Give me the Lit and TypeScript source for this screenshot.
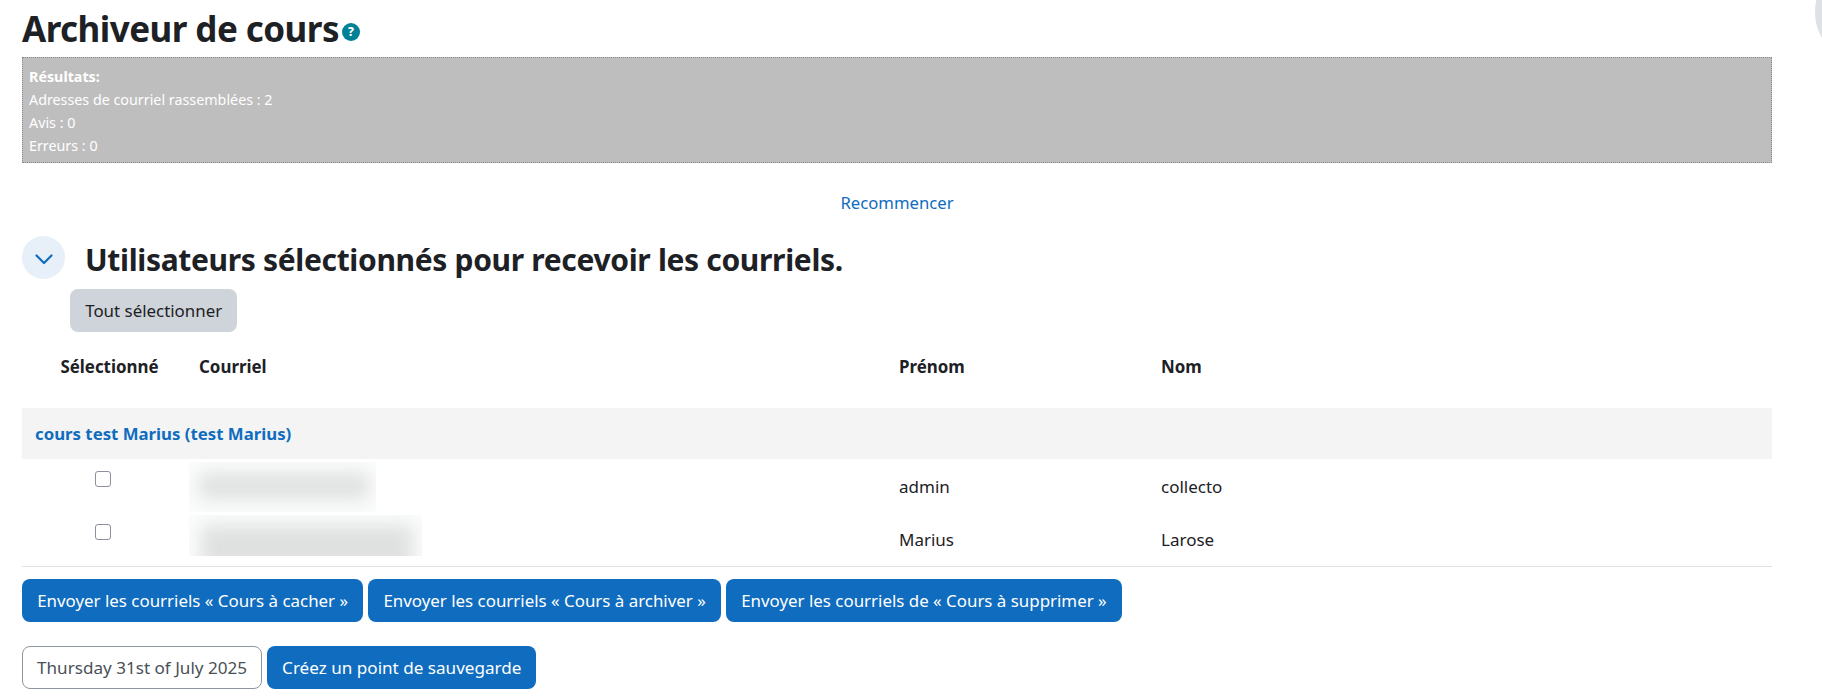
import { LitElement, html, css } from "lit";
import { customElement } from "lit/decorators.js";

@customElement("app-root")
export class AppRoot extends LitElement {
  static styles = css`
    :host {
      display: block;
      position: relative;
      height: 698px;
      overflow: hidden;
      box-sizing: border-box;
      padding: 0 50px 0 22px;
      background: #fff;
      color: #1d2125;
      font-family: "Noto Sans", "Open Sans", sans-serif;
      font-size: 16px;
    }
    .corner {
      position: absolute;
      right: -97px;
      top: -40px;
      width: 104px;
      height: 104px;
      border-radius: 50%;
      background: #dee2e6;
    }
    .title {
      display: flex;
      align-items: flex-end;
      height: 57px;
      box-sizing: border-box;
      padding-bottom: 6px;
    }
    h2 {
      margin: 0;
      font-size: 35px;
      line-height: 45px;
      font-weight: 700;
      letter-spacing: -0.55px;
    }
    .help {
      display: flex;
      width: 18px;
      height: 18px;
      margin: 0 0 10px 3px;
      border-radius: 50%;
      background: #008196;
      color: #fff;
      font-size: 12px;
      font-weight: 800;
      line-height: 18px;
      justify-content: center;
    }
    .results {
      height: 106px;
      box-sizing: border-box;
      padding: 7px 6px;
      background: #bebebe;
      border: 1px dotted #8a8a8a;
      color: #fff;
      font-size: 14.3px;
      line-height: 23px;
    }
    .results b { display: block; }
    .results span { display: block; }
    .restart {
      display: block;
      height: 73px;
      padding-top: 28px;
      box-sizing: border-box;
      text-align: center;
      color: #0f6cbf;
      font-size: 16.7px;
      line-height: 24px;
    }
    .section {
      display: flex;
      align-items: center;
      gap: 20px;
      height: 43px;
    }
    .toggle {
      width: 43px;
      height: 43px;
      border-radius: 50%;
      background: #e7eff8;
      display: flex;
      align-items: center;
      justify-content: center;
      flex: none;
    }
    .toggle svg { display: block; margin: 2px 0 0 1px; }
    h3 {
      margin: 4px 0 0;
      font-size: 30px;
      line-height: 36px;
      font-weight: 700;
      letter-spacing: -0.33px;
    }
    .select-row {
      padding: 10px 0 0 48px;
      height: 43px;
    }
    .btn {
      display: inline-flex;
      align-items: center;
      height: 43px;
      box-sizing: border-box;
      padding: 0 14.2px;
      border: 1px solid transparent;
      border-radius: 8px;
      background: #0f6cbf;
      color: #fff;
      font: inherit;
      font-size: 16.9px;
      white-space: nowrap;
    }
    .btn.grey { background: #ced4da; color: #1d2125; }
    .btn.outline {
      background: #fff;
      color: #495057;
      border-color: #8f959e;
    }
    .second .btn { font-size: 17.1px; padding: 0 14px; }
    .head, .row {
      display: grid;
      grid-template-columns: 167px 700px 262px 1fr;
    }
    .head {
      margin-top: 10px;
      height: 66px;
      box-sizing: border-box;
      font-size: 16.9px;
      font-weight: 700;
      line-height: 26px;
      align-items: start;
      padding-top: 12px;
    }
    .head .sel { text-align: center; padding-left: 8px; white-space: nowrap; }
    .cell { padding-left: 10px; }
    .group {
      height: 51px;
      background: #f4f4f4;
      padding-left: 13px;
      color: #0f6cbf;
      font-size: 16.8px;
      font-weight: 700;
      line-height: 51px;
    }
    .row {
      height: 53px;
      font-size: 17px;
    }
    .row .check { padding: 12px 0 0 73px; }
    .row .val { padding-top: 16px; line-height: 24px; }
    .box {
      width: 16px;
      height: 16px;
      box-sizing: border-box;
      border: 1px solid #8f8f9d;
      border-radius: 3px;
      background: #fff;
    }
    .mail {
      overflow: hidden;
      position: relative;
      background: #fbfcfc;
      margin-top: 3px;
    }
    .mail.one { width: 187px; height: 50px; }
    .mail.two { width: 233px; height: 41px; }
    .smear {
      position: absolute;
      background: #dfe0e0;
      filter: blur(9px);
    }
    .one .smear { left: 10px; top: 11px; width: 170px; height: 26px; }
    .two .smear { left: 12px; top: 10px; width: 212px; height: 44px; }
    .rows { border-bottom: 1px solid #dee2e6; height: 108px; box-sizing: border-box; }
    .actions {
      display: flex;
      gap: 5px;
      padding-top: 12px;
    }
    .actions.second { padding-top: 24px; }
  `;

  render() {
    return html`
      <div class="corner"></div>
      <div class="title">
        <h2>Archiveur de cours</h2>
        <span class="help">?</span>
      </div>
      <div class="results">
        <b>Résultats:</b>
        <span>Adresses de courriel rassemblées : 2</span>
        <span>Avis : 0</span>
        <span>Erreurs : 0</span>
      </div>
      <a class="restart">Recommencer</a>
      <div class="section">
        <span class="toggle">
          <svg width="20" height="20" viewBox="0 0 20 20" fill="none" stroke="#0f6cbf" stroke-width="2.2" stroke-linecap="round" stroke-linejoin="round"><path d="M2.5 6.5l7.5 7.5 7.5-7.5"/></svg>
        </span>
        <h3>Utilisateurs sélectionnés pour recevoir les courriels.</h3>
      </div>
      <div class="select-row"><span class="btn grey">Tout sélectionner</span></div>
      <div class="head">
        <div class="sel">Sélectionné</div>
        <div class="cell">Courriel</div>
        <div class="cell">Prénom</div>
        <div class="cell">Nom</div>
      </div>
      <div class="group">cours test Marius (test Marius)</div>
      <div class="rows">
        <div class="row">
          <div class="check"><div class="box"></div></div>
          <div><div class="mail one"><div class="smear"></div></div></div>
          <div class="cell val">admin</div>
          <div class="cell val">collecto</div>
        </div>
        <div class="row">
          <div class="check"><div class="box"></div></div>
          <div><div class="mail two"><div class="smear"></div></div></div>
          <div class="cell val">Marius</div>
          <div class="cell val">Larose</div>
        </div>
      </div>
      <div class="actions">
        <span class="btn">Envoyer les courriels « Cours à cacher »</span>
        <span class="btn">Envoyer les courriels « Cours à archiver »</span>
        <span class="btn">Envoyer les courriels de « Cours à supprimer »</span>
      </div>
      <div class="actions second">
        <span class="btn outline">Thursday 31st of July 2025</span>
        <span class="btn">Créez un point de sauvegarde</span>
      </div>
    `;
  }
}
